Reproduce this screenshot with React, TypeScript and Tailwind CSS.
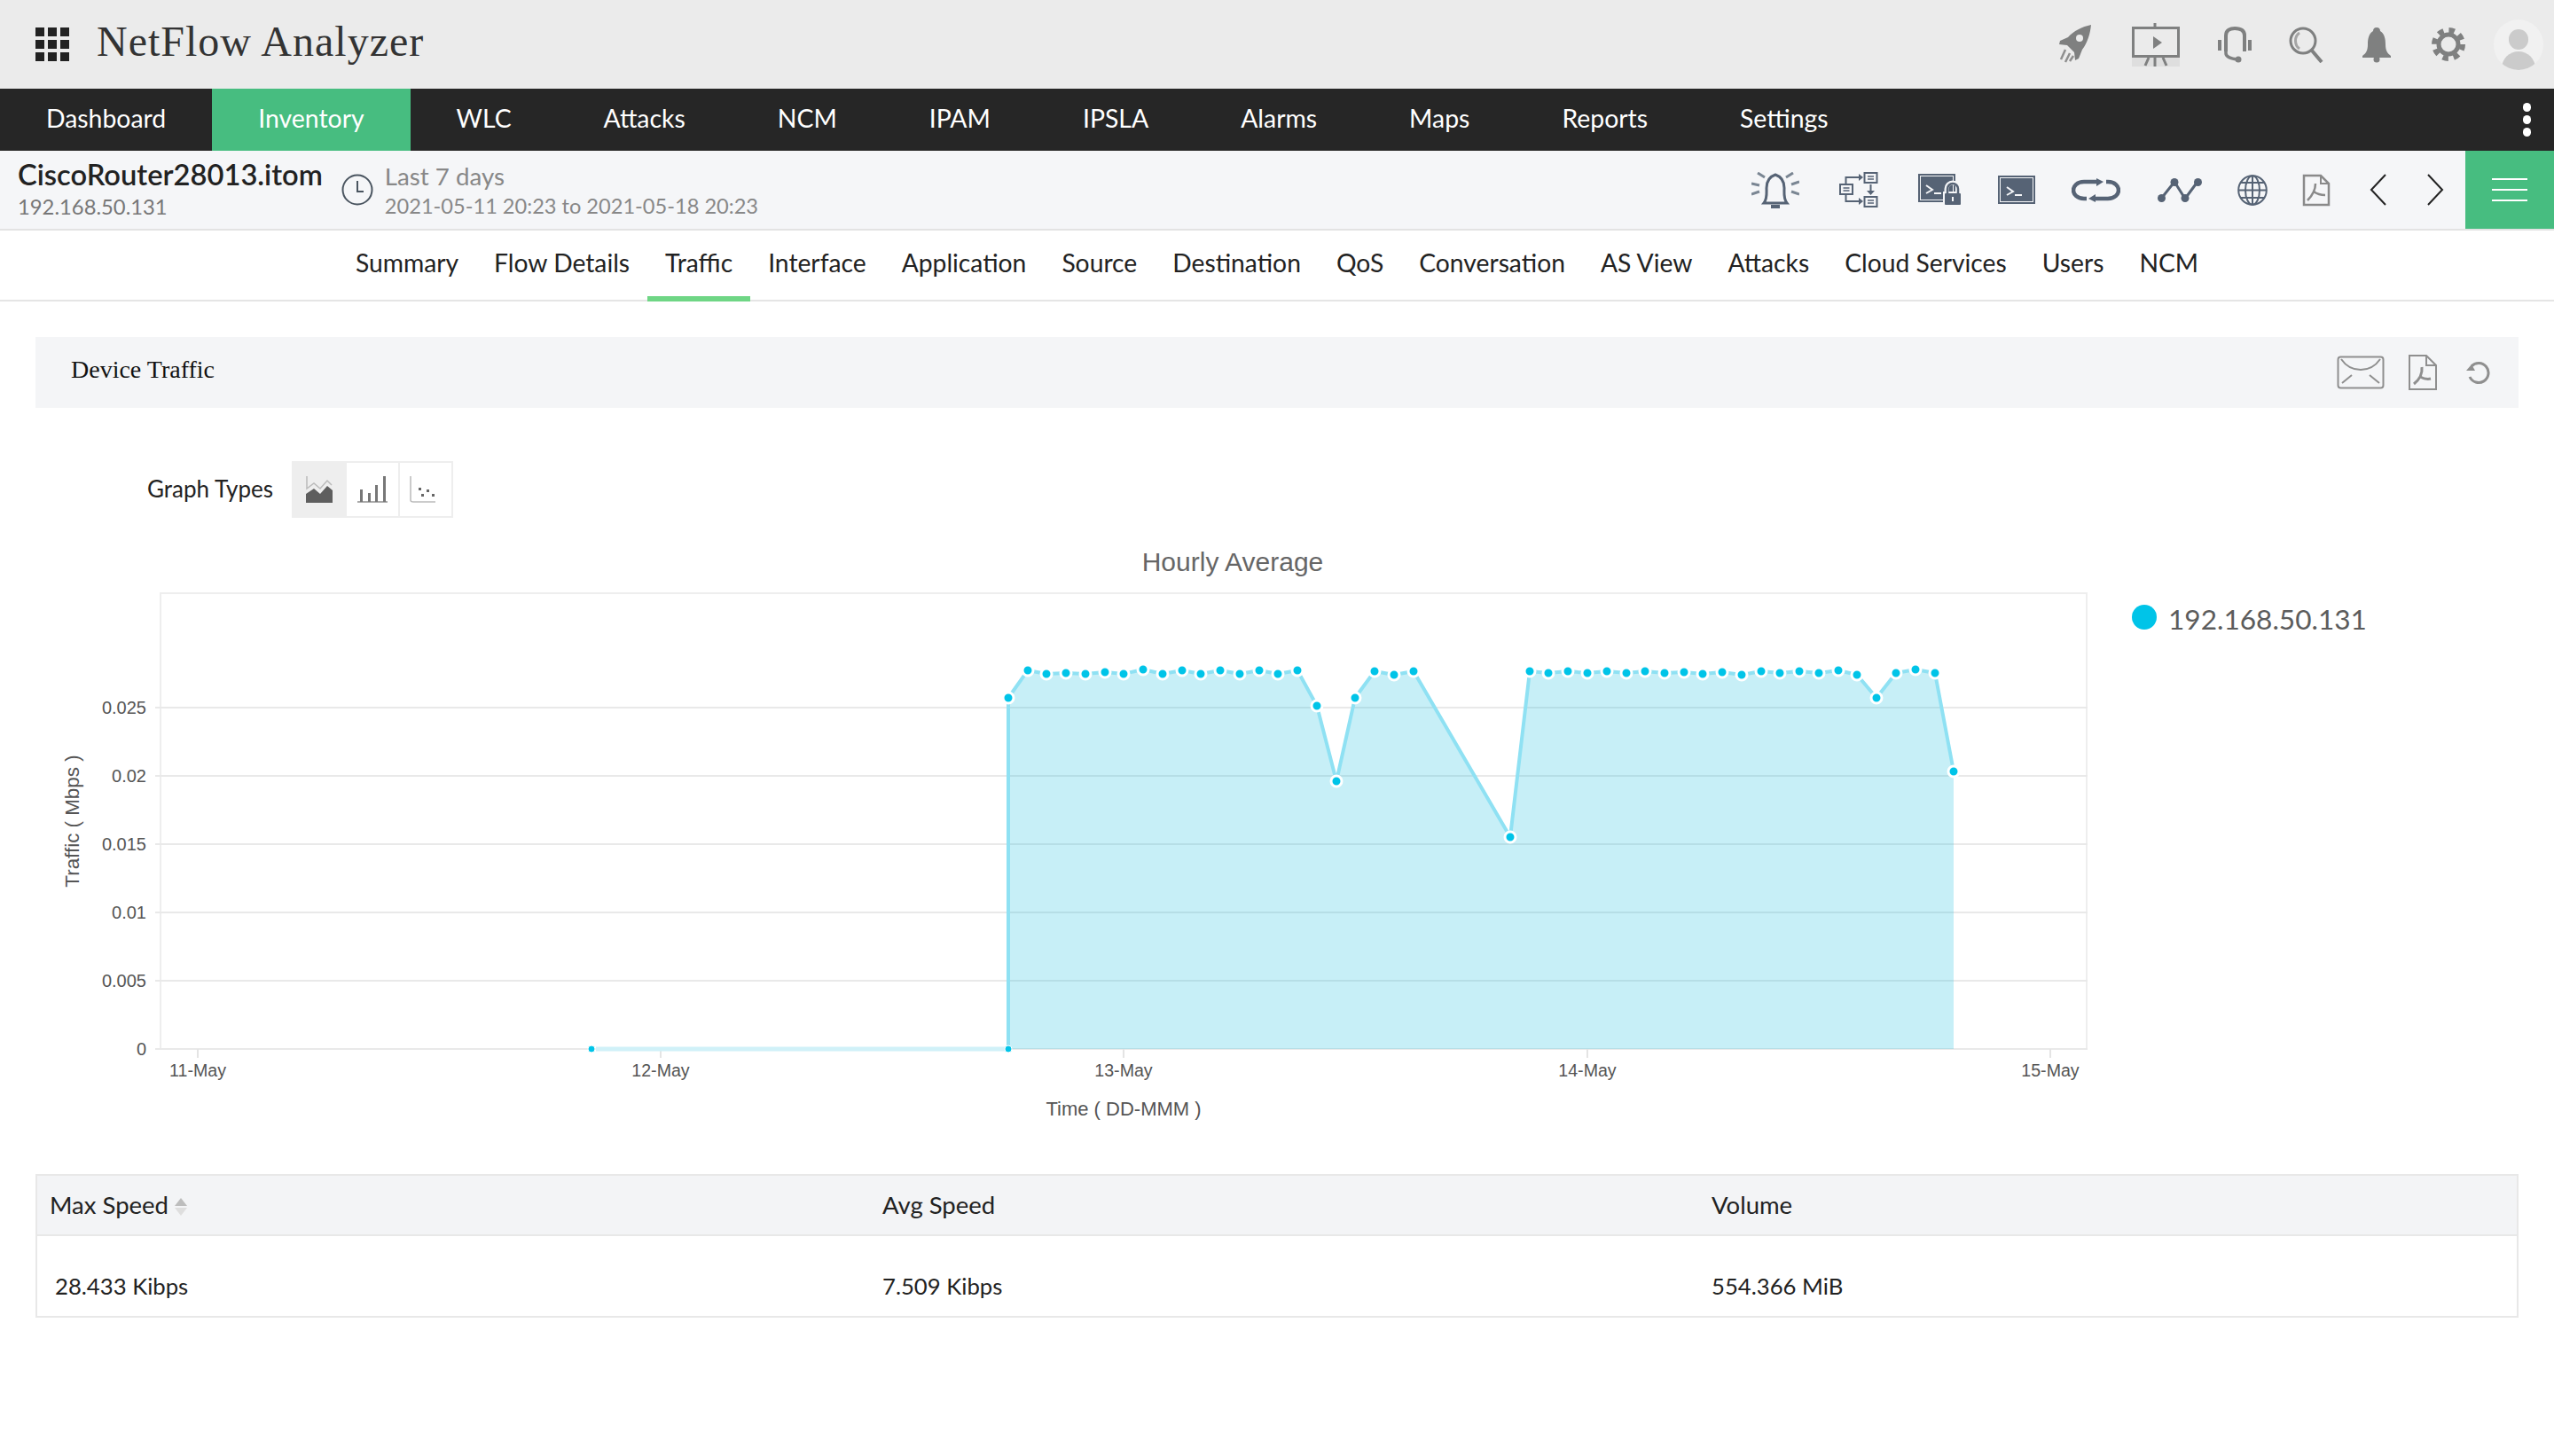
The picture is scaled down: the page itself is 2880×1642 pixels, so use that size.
import React from "react";

const navItems = ["Dashboard", "Inventory", "WLC", "Attacks", "NCM", "IPAM", "IPSLA", "Alarms", "Maps", "Reports", "Settings"];
const tabs = ["Summary", "Flow Details", "Traffic", "Interface", "Application", "Source", "Destination", "QoS", "Conversation", "AS View", "Attacks", "Cloud Services", "Users", "NCM"];

// chart points, in page pixels
const points: [number, number][] = [
  [1137, 787], [1159, 756], [1180, 760], [1202, 759], [1224, 760], [1246, 758], [1267, 760], [1289, 755], [1311, 760],
  [1333, 756], [1354, 760], [1376, 756], [1398, 760], [1420, 756], [1441, 760], [1463, 756], [1485, 796], [1507, 881],
  [1528, 787], [1550, 757], [1572, 761], [1594, 757], [1703, 944], [1725, 757], [1746, 759], [1768, 757], [1790, 759],
  [1812, 757], [1834, 759], [1855, 757], [1877, 759], [1899, 758], [1920, 760], [1942, 758], [1964, 761], [1986, 757],
  [2007, 759], [2029, 757], [2051, 759], [2073, 756], [2094, 761], [2116, 787], [2138, 759], [2160, 755], [2182, 759],
  [2203, 870],
];
const yTicks: [string, number][] = [["0.025", 798], ["0.02", 875], ["0.015", 952], ["0.01", 1029], ["0.005", 1106], ["0", 1183]];
const xTicks: [string, number][] = [["11-May", 223], ["12-May", 745], ["13-May", 1267], ["14-May", 1790], ["15-May", 2312]];

function TrafficChart() {
  const line = points.map((p) => p.join(",")).join(" ");
  return (
    <svg width={2800} height={660} viewBox="40 610 2800 660" className="block" fontFamily="'Liberation Sans', Arial, sans-serif">
      <text x={1390} y={644} textAnchor="middle" fontSize={30} fill="#666">Hourly Average</text>
      <rect x={181} y={669} width={2172} height={514} fill="none" stroke="#eeeeee" strokeWidth={2} />
      {yTicks.map(([label, y]) => (
        <g key={label}>
          <line x1={175} x2={2354} y1={y} y2={y} stroke="#e9e9e9" strokeWidth={2} />
          <text x={165} y={y + 7} textAnchor="end" fontSize={20} fill="#555">{label}</text>
        </g>
      ))}
      {xTicks.map(([label, x]) => (
        <g key={label}>
          <line x1={x} x2={x} y1={1183} y2={1193} stroke="#e4e4e4" strokeWidth={2} />
          <text x={x} y={1214} textAnchor="middle" fontSize={19.6} fill="#555">{label}</text>
        </g>
      ))}
      <text x={1267} y={1258} textAnchor="middle" fontSize={22} fill="#555">Time ( DD-MMM )</text>
      <text transform="translate(89 926) rotate(-90)" textAnchor="middle" fontSize={22.4} fill="#555">Traffic ( Mbps )</text>

      <polygon points={`1137,1183 ${line} 2203,1183`} fill="#00b4dc" fillOpacity={0.22} />
      <polyline points={`1137,1183 ${line}`} fill="none" stroke="#8fe1f3" strokeWidth={4} strokeLinejoin="round" />
      <line x1={672} x2={1137} y1={1183} y2={1183} stroke="#d0f1f8" strokeWidth={5} />
      {[[667, 1183], [1137, 1183], ...points].map(([x, y]) => (
        <circle key={`${x}-${y}`} cx={x} cy={y} r={y === 1183 ? 4 : 6} fill="#00c4e8" stroke="#fff" strokeWidth={y === 1183 ? 1 : 3} />
      ))}

      <circle cx={2418} cy={696} r={14} fill="#00c4e8" />
      <text x={2445} y={710} fontSize={31.6} fill="#5c5c5c" fontFamily="Lato, sans-serif">192.168.50.131</text>
    </svg>
  );
}

function TopIcons() {
  const c = "#7f8080";
  return (
    <div className="ml-auto flex items-center pr-[12px]">
      <svg width="40" height="46" viewBox="-1 -1 40 46">
        <path d="M36 0C26 2 16 7 10 14L1 18 0 22 9 23 17 31 18 40 22 38 26 28C32 20 35 10 36 0Z" fill={c} />
        <circle cx="23" cy="15" r="4" fill="#ebebeb" />
        <path d="M7 28 2 39M12 32 7 42M16 35 12 41" stroke="#8f8f8f" strokeWidth="2.5" />
      </svg>
      <svg className="ml-[43px]" width="54" height="49" viewBox="0 0 54 49">
        <rect x="0" y="39" width="54" height="10" fill="#dedede" />
        <rect x="1.5" y="5.5" width="51" height="32" fill="none" stroke={c} strokeWidth="3" />
        <path d="M26 0V5M26 38V49M15 48 19 39M39 48 35 39" stroke={c} strokeWidth="3" />
        <path d="M24 15 34 22 24 29Z" fill={c} />
      </svg>
      <svg className="ml-[43px]" width="38" height="41" viewBox="0 0 38 41" fill="none">
        <path d="M9 28V10C9 4 14 2 19 2 25 2 30 4 30 10V28" stroke={c} strokeWidth="4" />
        <path d="M9 26V30C9 34 14 36 22 37" stroke={c} strokeWidth="3.5" />
        <circle cx="23" cy="37" r="3.5" fill={c} />
        <rect x="0" y="15" width="4" height="12" fill={c} />
        <rect x="34" y="15" width="4" height="12" fill={c} />
      </svg>
      <svg className="ml-[41px]" width="40" height="42" viewBox="0 0 40 42" fill="none">
        <circle cx="17" cy="17" r="14" stroke={c} strokeWidth="3" />
        <path d="M13 8C7 12 7 22 13 26" stroke="#a5a5a5" strokeWidth="3" />
        <path d="M27 28 38 41" stroke={c} strokeWidth="4" />
      </svg>
      <svg className="ml-[43px]" width="34" height="41" viewBox="0 0 34 41">
        <path d="M17 1C20 1 21 3 21 5 26 8 27 14 27 20 27 27 29 30 33 33V35H1V33C5 30 7 27 7 20 7 14 8 8 13 5 13 3 14 1 17 1Z" fill={c} />
        <circle cx="17" cy="37" r="3.5" fill={c} />
      </svg>
      <svg className="ml-[44px]" width="40" height="40" viewBox="0 0 40 40" fill="none">
        <circle cx="20" cy="20" r="11" stroke={c} strokeWidth="5" />
        <circle cx="20" cy="20" r="16" stroke={c} strokeWidth="6" strokeDasharray="6.5 6.06" />
      </svg>
      <div className="relative ml-[31px] h-[57px] w-[56px] overflow-hidden rounded-full bg-[#f1f1f1]">
        <div className="absolute left-[17px] top-[11px] h-[23px] w-[22px] rounded-full bg-[#cbcbcb]" />
        <div className="absolute left-[9px] top-[36px] h-[32px] w-[38px] rounded-t-full bg-[#cbcbcb]" />
      </div>
    </div>
  );
}

function SubIcons() {
  const c = "#566375";
  return (
    <div className="ml-auto flex items-center">
      <svg width="54" height="41" viewBox="0 0 54 41" fill="none">
        <path d="M14 35C18 30 17 24 17 18 17 10 21 5 27 3 33 5 37 10 37 18 37 24 36 30 40 35Z" stroke={c} strokeWidth="3" />
        <path d="M22 37H32V41H22Z" fill={c} />
        <path d="M7 1 15 6M47 1 39 6M0 13 9 15M54 11 45 14M0 25 9 22M54 25 45 22" stroke="#7a8693" strokeWidth="3" />
      </svg>
      <svg className="ml-[45px]" width="44" height="40" viewBox="0 0 44 40" fill="none" stroke={c} strokeWidth="2">
        <rect x="28.5" y="1" width="14" height="11" /><rect x="1" y="14" width="14" height="11" /><rect x="28.5" y="28" width="14" height="11" />
        <path d="M7.5 13V6H23M7.5 25V33H23M35.5 14V22" />
        <path d="M22 2 27 6 22 10ZM22 29 27 33 22 37ZM31 21H40L35.5 26Z" fill={c} stroke="none" />
        <path d="M32 5H39M32 8H39M4.5 18H11.5M4.5 21H11.5M32 32H39M32 35H39" strokeWidth="1.5" />
      </svg>
      <svg className="ml-[45px]" width="49" height="37" viewBox="0 0 49 37" fill="none">
        <rect x="0" y="0" width="42" height="32" fill={c} />
        <rect x="2.5" y="2.5" width="37" height="27" stroke="#f5f6f8" strokeWidth="1" />
        <path d="M9 13 16 18 9 22M18 22H26" stroke="#f5f6f8" strokeWidth="2" />
        <rect x="28" y="20" width="21" height="17" fill="#f5f6f8" />
        <path d="M32 23V17a7 7 0 0 1 14 0V23" stroke="#f5f6f8" strokeWidth="5" />
        <path d="M33 23V17a6 6 0 0 1 12 0V23" stroke={c} strokeWidth="2.5" />
        <rect x="30" y="22" width="18" height="13" rx="1" fill={c} />
        <rect x="38" y="26" width="2" height="5" fill="#f5f6f8" />
      </svg>
      <svg className="ml-[41px]" width="42" height="32" viewBox="0 0 42 32" fill="none">
        <rect x="0" y="0" width="42" height="32" fill={c} />
        <rect x="2.5" y="2.5" width="37" height="27" stroke="#f5f6f8" strokeWidth="1" />
        <path d="M10 13 17 18 10 22M19 22H27" stroke="#f5f6f8" strokeWidth="2" />
      </svg>
      <svg className="ml-[41px]" width="55" height="27" viewBox="0 0 55 27" fill="none" stroke={c} strokeWidth="4.5">
        <path d="M30 4H14C6 4 2 9 2 13.5S6 23 14 23H17" />
        <path d="M25 23H41C49 23 53 18 53 13.5S49 4 41 4H39" />
        <path d="M28 0V9L36 4ZM27 18V27L19 23Z" fill={c} stroke="none" />
      </svg>
      <svg className="ml-[42px]" width="50" height="27" viewBox="0 0 50 27" fill="none">
        <path d="M4 23 19 4 31 23 45 4" stroke={c} strokeWidth="3" />
        <circle cx="4.5" cy="22.5" r="4.5" fill={c} /><circle cx="19" cy="4.5" r="4.5" fill={c} /><circle cx="31" cy="22.5" r="4.5" fill={c} /><circle cx="45.5" cy="4.5" r="4.5" fill={c} />
      </svg>
      <svg className="ml-[40px]" width="34" height="35" viewBox="0 0 34 35" fill="none" stroke={c} strokeWidth="2">
        <ellipse cx="17" cy="17.5" rx="15.8" ry="16.3" />
        <ellipse cx="17" cy="17.5" rx="8" ry="16.3" />
        <path d="M17 1V34M1 17.5H33M4 9H30M4 26H30" />
      </svg>
      <svg className="ml-[39px]" width="32" height="37" viewBox="0 0 32 37" fill="none">
        <path d="M2 2H21L30 11V35H2Z" stroke="#8a8a8a" strokeWidth="2.5" />
        <path d="M21 2V11H30" stroke="#8a8a8a" strokeWidth="2" />
        <path d="M15 11C15 20 10 26 6 30M13 20C17 23 22 24 26 24" stroke="#8a8a8a" strokeWidth="2.5" />
      </svg>
      <svg className="ml-[43px]" width="22" height="36" viewBox="0 0 22 36" fill="none" stroke="#222" strokeWidth="2"><path d="M19 1 3 18 19 35" /></svg>
      <svg className="ml-[42px]" width="22" height="36" viewBox="0 0 22 36" fill="none" stroke="#222" strokeWidth="2"><path d="M3 1 19 18 3 35" /></svg>
      <div className="ml-[23px] flex h-[88px] w-[100px] flex-col items-center justify-center gap-[10px] bg-[#47bd80]">
        <div className="h-[2px] w-[40px] bg-white" />
        <div className="h-[2px] w-[40px] bg-white" />
        <div className="h-[2px] w-[40px] bg-white" />
      </div>
    </div>
  );
}

export default function App() {
  return (
    <div className="min-h-[1642px] bg-white font-['Lato',sans-serif] text-[#222]">
      {/* top bar */}
      <div className="flex h-[100px] items-center bg-[#ebebeb]">
        <div className="ml-[40px] grid grid-cols-3 gap-[4px]">
          {Array.from({ length: 9 }).map((_, i) => (
            <span key={i} className="h-[10px] w-[10px] bg-[#222]" />
          ))}
        </div>
        <span className="ml-[31px] pb-[7px] font-['Liberation_Serif',serif] text-[48px] tracking-[1px] text-[#333]">NetFlow Analyzer</span>
        <TopIcons />
      </div>

      {/* main nav */}
      <nav className="flex h-[70px] items-stretch bg-[#262626] text-[28.4px] text-white">
        {navItems.map((item) => (
          <a key={item} className={`flex items-center px-[52px] pb-[3px] ${item === "Inventory" ? "bg-[#47bd80]" : ""}`}>{item}</a>
        ))}
        <div className="ml-auto mr-[26px] flex flex-col items-center justify-center gap-[4px]">
          <span className="h-[10px] w-[9px] rounded-full bg-white" />
          <span className="h-[10px] w-[9px] rounded-full bg-white" />
          <span className="h-[10px] w-[9px] rounded-full bg-white" />
        </div>
      </nav>

      {/* device header */}
      <div className="flex h-[90px] items-center border-b-2 border-[#e3e3e3] bg-[#f5f6f8]">
        <div className="ml-[20px] flex flex-col pb-[2px]">
          <span className="text-[32.7px] font-semibold leading-[40px] text-[#222]">CiscoRouter28013.itom</span>
          <span className="text-[23.8px] leading-[32px] text-[#777]">192.168.50.131</span>
        </div>
        <svg className="ml-[21px]" width="36" height="36" viewBox="0 0 36 36" fill="none" stroke="#4a5560" strokeWidth="2">
          <circle cx="18" cy="18" r="16.5" />
          <path d="M18 8V20H25" />
        </svg>
        <div className="ml-[13px] flex flex-col">
          <span className="text-[27.7px] leading-[36px] text-[#888]">Last 7 days</span>
          <span className="text-[23.6px] leading-[30px] text-[#888]">2021-05-11 20:23 to 2021-05-18 20:23</span>
        </div>
        <SubIcons />
      </div>

      {/* tabs */}
      <div className="flex h-[80px] justify-center border-b-2 border-[#e5e5e5] text-[28.25px] text-[#222]">
        {tabs.map((tab, i) => (
          <a key={i} className={`-mb-[2px] flex items-center border-b-[6px] px-[20px] pb-[2px] ${tab === "Traffic" ? "border-[#6fd685]" : "border-transparent"}`}>{tab}</a>
        ))}
      </div>

      <div className="px-[40px]">
        {/* section bar */}
        <div className="mt-[40px] flex h-[80px] items-center bg-[#f4f5f7] pl-[40px] pr-[32px]">
          <span className="pb-[6px] font-['Liberation_Serif',serif] text-[28px] text-[#111]">Device Traffic</span>
          <svg className="ml-auto" width="54" height="38" viewBox="0 0 54 38" fill="none" stroke="#8f8f8f" strokeWidth="2">
            <rect x="1.5" y="1.5" width="51" height="35" rx="3" />
            <path d="M5 4C16 20 38 20 49 4" />
            <path d="M6 31 17 22M48 31 37 22" />
          </svg>
          <svg className="ml-[26px]" width="34" height="42" viewBox="0 0 34 42" fill="none" stroke="#8f8f8f" strokeWidth="2">
            <path d="M2 2H21L32 13V40H2Z" />
            <path d="M21 2V13H32" />
            <path d="M16 15C17 24 12 30 7 34M14 26C18 28 22 29 26 28" strokeWidth="3" />
          </svg>
          <svg className="ml-[31px]" width="28" height="28" viewBox="0 0 28 28" fill="none">
            <path d="M7 7A11 11 0 1 1 5 19" stroke="#8f8f8f" strokeWidth="3" />
            <path d="M1 12H11L7 5Z" fill="#8f8f8f" />
          </svg>
        </div>

        {/* graph types */}
        <div className="mt-[60px] flex h-[64px] items-center pl-[126px]">
          <span className="pb-[2px] text-[26px] text-[#222]">Graph Types</span>
          <div className="ml-[21px] flex h-[64px] border-2 border-[#eeeeee]">
            <div className="flex w-[58px] items-center justify-center bg-[#eeeeee]">
              <svg width="30" height="30" viewBox="0 0 30 30" fill="none">
                <path d="M1 0V14L9 8 16 14 24 5 29 10" stroke="#bbb" strokeWidth="1.5" />
                <path d="M0 30V20L9 14 16 20 24 11 30 16V30Z" fill="#5e5e5e" />
              </svg>
            </div>
            <div className="flex w-[60px] items-center justify-center border-l-2 border-[#eeeeee]">
              <svg width="34" height="30" viewBox="0 0 34 30">
                <path d="M0 29H34" stroke="#aaa" strokeWidth="2" />
                <rect x="3" y="15" width="3" height="14" fill="#777" /><rect x="12" y="19" width="3" height="10" fill="#777" />
                <rect x="20" y="10" width="3" height="19" fill="#777" /><rect x="29" y="0" width="3" height="29" fill="#777" />
              </svg>
            </div>
            <div className="flex w-[60px] items-center justify-center border-l-2 border-[#eeeeee] pr-[6px]">
              <svg width="30" height="30" viewBox="0 0 30 30" fill="none">
                <path d="M1 0V27C1 28.5 2 29 4 29H29" stroke="#bbb" strokeWidth="1.5" />
                <rect x="10" y="13" width="3" height="3" fill="#666" /><rect x="13" y="20" width="3" height="3" fill="#666" />
                <rect x="19" y="15" width="3" height="3" fill="#666" /><rect x="25" y="20" width="3" height="3" fill="#666" />
              </svg>
            </div>
          </div>
        </div>

        <div className="mt-[26px]">
          <TrafficChart />
        </div>

        {/* summary table */}
        <div className="mt-[54px] border-2 border-[#e8e8e8] text-[27.5px] text-[#222]">
          <div className="grid h-[68px] grid-cols-[953px_935px_1fr] items-center border-b-2 border-[#e8e8e8] bg-[#f3f4f6]">
            <span className="flex items-center gap-[6px] pl-[14px]">
              Max Speed
              <svg className="mt-[4px]" width="16" height="22" viewBox="0 0 16 22"><path d="M8 1 15 10H1Z" fill="#bdbdbd" /><path d="M8 21 15 12H1Z" fill="#dedede" /></svg>
            </span>
            <span>Avg Speed</span>
            <span>Volume</span>
          </div>
          <div className="grid h-[90px] grid-cols-[953px_935px_1fr] items-center pt-[22px] text-[25.7px]">
            <span className="pl-[20px]">28.433 Kibps</span>
            <span>7.509 Kibps</span>
            <span>554.366 MiB</span>
          </div>
        </div>
      </div>
    </div>
  );
}
